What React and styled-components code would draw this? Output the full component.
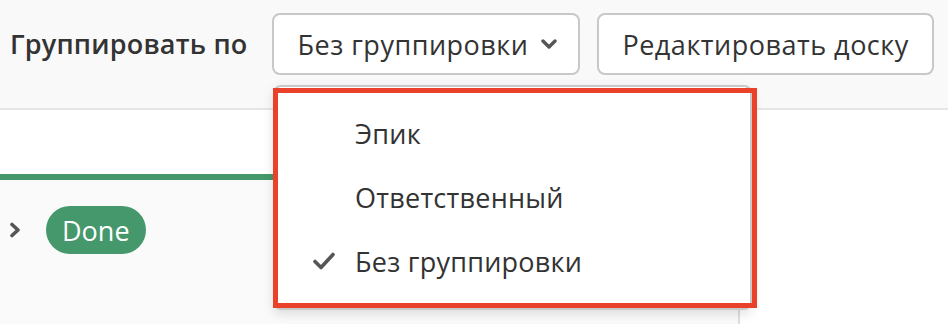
import styled, { createGlobalStyle } from "styled-components";

const GlobalStyle = createGlobalStyle`
  html, body {
    margin: 0;
    padding: 0;
    background: #ffffff;
    font-family: "Open Sans", "Noto Sans", "Liberation Sans", sans-serif;
    color: #333333;
  }
`;

const Page = styled.div`
  width: 948px;
  height: 326px;
  position: relative;
  overflow: hidden;
  background: #ffffff;
`;

const Toolbar = styled.div`
  height: 110px;
  box-sizing: border-box;
  padding: 13px 0 0 10px;
  display: flex;
  align-items: flex-start;
  background: #f9f9f9;
  border-bottom: 2px solid #e6e6e6;
  white-space: nowrap;
`;

const Label = styled.span`
  flex-shrink: 0;
  font-size: 27px;
  font-weight: 600;
  letter-spacing: 0.2px;
  line-height: 62px;
  margin-right: 25px;
  color: #333333;
`;

const Button = styled.button`
  flex-shrink: 0;
  height: 62px;
  box-sizing: border-box;
  padding: 0 ${props => (props.select ? 21 : 23)}px 0 23px;
  margin-right: ${props => props.gap || 0}px;
  display: flex;
  align-items: center;
  gap: 13px;
  background: #ffffff;
  border: 2px solid #c8c8c8;
  border-radius: 8px;
  font-family: inherit;
  font-size: 27px;
  letter-spacing: 0.5px;
  white-space: nowrap;
  color: #333333;
  cursor: pointer;
`;

const Board = styled.div`
  display: flex;
  height: 214px;
`;

const Column = styled.div`
  width: 740px;
  box-sizing: border-box;
  border-right: 2px solid #dedede;
  display: flex;
  flex-direction: column;
`;

const ColumnHeader = styled.div`
  height: 64px;
  background: #ffffff;
  border-bottom: 6px solid #44986b;
`;

const ColumnBody = styled.div`
  flex: 1;
  background: #fafafa;
`;

const Lane = styled.div`
  display: flex;
  align-items: center;
  padding: 26px 0 0 9px;
  gap: 25px;
`;

const Pill = styled.span`
  height: 48px;
  padding: 0 16px;
  display: inline-flex;
  align-items: center;
  border-radius: 24px;
  background: #44986b;
  color: #ffffff;
  font-size: 27px;
`;

const Rest = styled.div`
  flex: 1;
  background: #ffffff;
`;

const Menu = styled.div`
  position: absolute;
  left: 273px;
  top: 85px;
  width: 479px;
  height: 225px;
  box-sizing: border-box;
  padding-top: 14px;
  background: #ffffff;
  border: 2px solid #c8c8c8;
  border-radius: 8px;
  box-shadow: 0 4px 12px rgba(0, 0, 0, 0.12);
`;

const Item = styled.div`
  height: 64px;
  display: flex;
  align-items: center;
  font-size: 27px;
  letter-spacing: 0.25px;
  white-space: nowrap;
  color: #333333;
`;

const CheckSlot = styled.span`
  width: 80px;
  display: flex;
  justify-content: flex-end;
  padding-right: 20px;
  box-sizing: border-box;
`;

const Highlight = styled.div`
  position: absolute;
  left: 273px;
  top: 88px;
  width: 484px;
  height: 220px;
  box-sizing: border-box;
  border: 5px solid #ea412b;
  pointer-events: none;
`;

const ChevronDown = () => (
  <svg width="16" height="10" viewBox="0 0 16 10">
    <path d="M2 2 L8 8 L14 2" fill="none" stroke="#555" strokeWidth="3.4" strokeLinecap="round" strokeLinejoin="round" />
  </svg>
);

const ChevronRight = () => (
  <svg width="12" height="16" viewBox="0 0 12 16">
    <path d="M3 2.5 L9 8 L3 13.5" fill="none" stroke="#555" strokeWidth="3.6" strokeLinecap="round" strokeLinejoin="round" />
  </svg>
);

const Check = () => (
  <svg width="22" height="18" viewBox="0 0 22 18">
    <path d="M2 9.5 L8 15.5 L20 2.5" fill="none" stroke="#555" strokeWidth="3.6" strokeLinecap="round" strokeLinejoin="round" />
  </svg>
);

const options = [
  { id: "epic", label: "Эпик" },
  { id: "assignee", label: "Ответственный" },
  { id: "none", label: "Без группировки", checked: true },
];

export default function App() {
  return (
    <Page>
      <GlobalStyle />
      <Toolbar>
        <Label>Группировать по</Label>
        <Button select gap={17}>
          Без группировки
          <ChevronDown />
        </Button>
        <Button>Редактировать доску</Button>
      </Toolbar>
      <Board>
        <Column>
          <ColumnHeader />
          <ColumnBody>
            <Lane>
              <ChevronRight />
              <Pill>Done</Pill>
            </Lane>
          </ColumnBody>
        </Column>
        <Rest />
      </Board>
      <Menu>
        {options.map(o => (
          <Item key={o.id}>
            <CheckSlot>{o.checked && <Check />}</CheckSlot>
            {o.label}
          </Item>
        ))}
      </Menu>
      <Highlight />
    </Page>
  );
}
